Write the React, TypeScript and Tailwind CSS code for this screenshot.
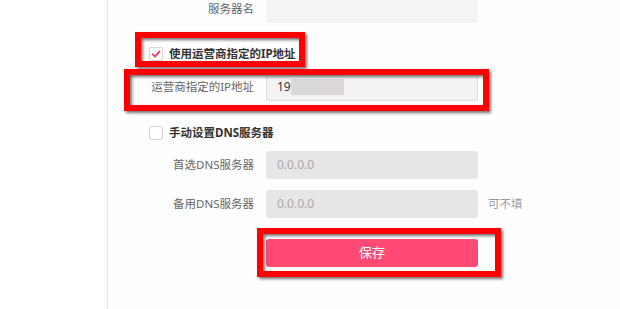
import React from "react";

const font = { fontFamily: '"Noto Sans", "Noto Sans CJK SC", sans-serif' };

function Label({ children }: { children: React.ReactNode }) {
  return (
    <div className="w-[146px] shrink-0 text-right text-[11.5px] leading-[28px] text-[#666666]">
      {children}
    </div>
  );
}

function CheckRow({ checked, children }: { checked: boolean; children: React.ReactNode }) {
  return (
    <div className="flex items-center h-[14px] pl-[41px]">
      <div className="w-[14px] h-[14px] rounded-[2px] border border-[#d6d6d6] bg-white flex items-center justify-center">
        {checked && (
          <svg width="10" height="10" viewBox="0 0 10 10">
            <path d="M1.5 5.2 L4 7.6 L8.6 2.4" fill="none" stroke="#f0396a" strokeWidth="1.8" strokeLinecap="round" strokeLinejoin="round" />
          </svg>
        )}
      </div>
      <span className="ml-[6px] text-[11.5px] font-bold text-[#333333] leading-[14px]">{children}</span>
    </div>
  );
}

function Annot({ className }: { className: string }) {
  return (
    <div
      className={`absolute border-[6px] border-[#ff0000] drop-shadow-[2px_2px_1.5px_rgba(0,0,0,0.55)] ${className}`}
    />
  );
}

export default function App() {
  return (
    <div className="relative flex w-[620px] h-[309px] overflow-hidden bg-white" style={font}>
      <div className="w-[107px] shrink-0" />
      <div className="flex-1 self-stretch border-l border-[#e6e6e6] bg-[#fefefe]">
        <div className="mt-[-5px] flex flex-col">
          {/* 服务器名 */}
          <div className="flex items-center gap-[12px]">
            <Label>服务器名</Label>
            <div className="w-[212px] h-[28px] rounded-[3px] bg-[#f4f4f4]" />
          </div>

          <div className="mt-[24px]">
            <CheckRow checked>使用运营商指定的IP地址</CheckRow>
          </div>

          <div className="mt-[12px] flex items-center gap-[12px]">
            <Label>运营商指定的IP地址</Label>
            <div className="w-[212px] h-[28px] rounded-[3px] bg-[#f3f3f3] border border-[#dcdcdc] flex items-center pl-[10px]">
              <span className="text-[12px] text-[#333333]">19</span>
              <div className="flex h-[16px]">
                <div className="w-[27px] bg-[#d9d9d9]" />
                <div className="w-[26px] bg-[#ddd8d8]" />
              </div>
            </div>
          </div>

          <div className="mt-[25px]">
            <CheckRow checked={false}>手动设置DNS服务器</CheckRow>
          </div>

          <div className="mt-[11px] flex items-center gap-[12px]">
            <Label>首选DNS服务器</Label>
            <div className="w-[212px] h-[28px] rounded-[3px] bg-[#e6e6e6] flex items-center pl-[11px]">
              <span className="text-[12px] text-[#a9a9a9]">0.0.0.0</span>
            </div>
          </div>

          <div className="mt-[11px] flex items-center gap-[12px]">
            <Label>备用DNS服务器</Label>
            <div className="w-[212px] h-[28px] rounded-[3px] bg-[#e6e6e6] flex items-center pl-[11px]">
              <span className="text-[12px] text-[#a9a9a9]">0.0.0.0</span>
            </div>
            <span className="ml-[-2px] text-[11.5px] text-[#999999]">可不填</span>
          </div>

          <div className="mt-[21px] flex">
            <div className="w-[146px] shrink-0" />
            <button className="ml-[12px] w-[212px] h-[28px] rounded-[3px] bg-[#ff4a75] text-white text-[13px]">
              保存
            </button>
          </div>
        </div>
      </div>

      <Annot className="left-[135px] top-[32px] w-[170px] h-[35px]" />
      <Annot className="left-[124px] top-[69px] w-[365px] h-[42px]" />
      <Annot className="left-[257px] top-[228px] w-[244px] h-[49px]" />
    </div>
  );
}
